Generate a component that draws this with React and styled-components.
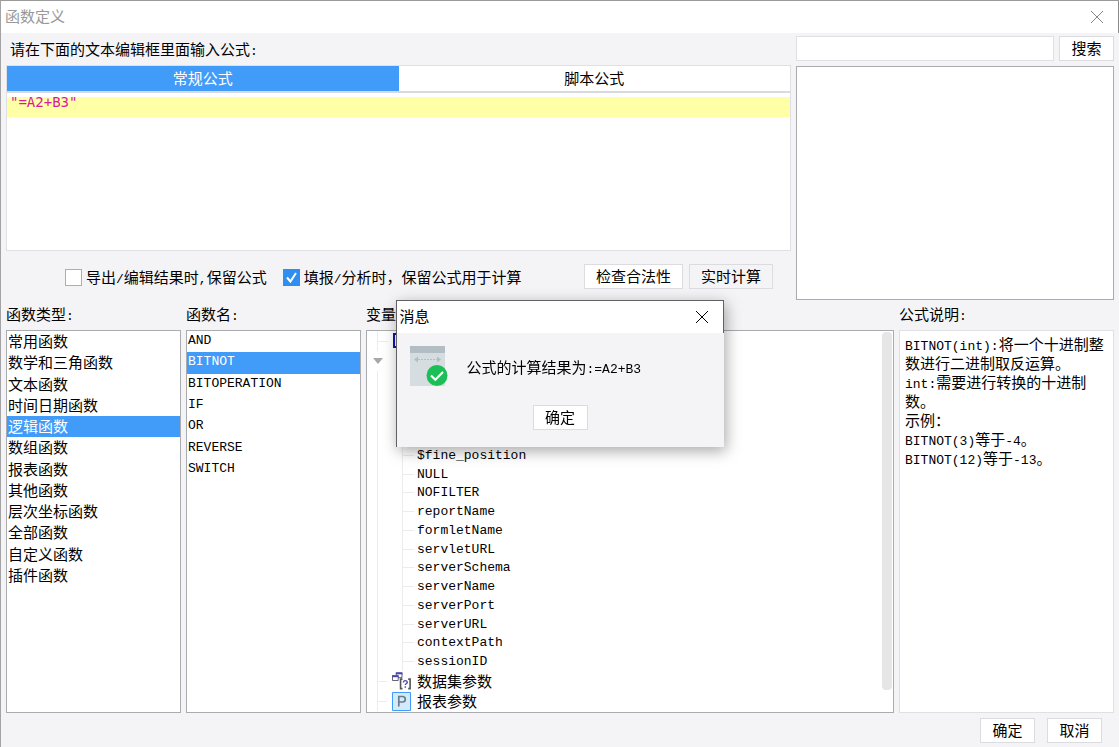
import React from "react";
import styled, { createGlobalStyle, css } from "styled-components";

const blue = "#419bf9";
const surface = "#f4f4f7";
const line = "#e0e0e4";
const frame = "#a9abae";

const GlobalStyle = createGlobalStyle`
  *, *::before, *::after { box-sizing: border-box; }
  body {
    margin: 0;
    color: #000;
    background: ${surface};
    font: 15px/20px "Noto Sans CJK SC", sans-serif;
  }
  button, input, textarea { font: inherit; color: inherit; }
  ul { list-style: none; margin: 0; padding: 0; }
`;

const Window = styled.div`
  min-height: 100vh;
  display: flex;
  flex-direction: column;
  border-top: 1px solid #9a9a9a;
  border-left: 1px solid #a3a3a5;
`;

const TitleBar = styled.header`
  height: 32px;
  display: flex;
  align-items: center;
  justify-content: space-between;
  padding: 0 14px 0 4px;
  background: #fff;
  border-right: 1px solid #8a8a8a;
  color: #999;
`;

const Title = styled.h1`
  margin: 0;
  padding-bottom: 2px;
  font: inherit;
`;

const CloseButton = styled.button`
  display: flex;
  padding: 0;
  border: 0;
  background: none;
`;

const Body = styled.main`
  flex: 1;
  display: flex;
  flex-direction: column;
  padding: 3px 5px 4px;
`;

const Top = styled.section`
  display: grid;
  grid-template-columns: minmax(0, 1fr) 318px;
  column-gap: 5px;
  height: 264px;
`;

const Column = styled.div`
  display: flex;
  flex-direction: column;
  min-width: 0;
`;

const Prompt = styled.label`
  height: 29px;
  padding: 3px 4px 0;
`;

const Tabs = styled.div`
  display: flex;
  height: 26px;
  border: 1px solid ${line};
  border-bottom: 0;
`;

const Tab = styled.button`
  flex: 1;
  padding: 0 0 2px;
  border: 0;
  background: ${(p) => (p.$active ? blue : "#fff")};
  color: ${(p) => (p.$active ? "#fff" : "#000")};
`;

const Editor = styled.textarea`
  height: 160px;
  resize: none;
  outline: 0;
  padding: 0 3px;
  border: 1px solid ${line};
  border-top: 2px solid #d9d9de;
  background: linear-gradient(#fff 4px, #ffffa6 4px, #ffffa6 24px, #fff 24px);
  color: #d81b9c;
  font: 14px/18px "DejaVu Sans Mono", monospace;
`;

const Options = styled.div`
  flex: 1;
  display: flex;
  align-items: center;
  gap: 16px;
  padding: 1px 18px 0 59px;
`;

const Check = styled.label`
  display: flex;
  align-items: center;
  gap: 4px;
  padding-top: 2px;
  white-space: nowrap;
`;

const Box = styled.input`
  appearance: none;
  width: 17px;
  height: 17px;
  margin: 0;
  border: 1px solid #adadb0;
  background: #fff;
  &:checked {
    border-color: #2e8ff0;
    background: #2e8ff0
      url("data:image/svg+xml,%3Csvg xmlns='http://www.w3.org/2000/svg' viewBox='0 0 15 15'%3E%3Cpath d='M3 7.5l3.4 4L12 3' fill='none' stroke='white' stroke-width='2'/%3E%3C/svg%3E");
  }
`;

const Actions = styled.div`
  display: flex;
  gap: ${(p) => p.$gap}px;
  margin-left: auto;
`;

const Button = styled.button`
  height: 25px;
  min-width: 55px;
  padding: 0 ${(p) => (p.$wide ? 11 : 8)}px 1px;
  line-height: 20px;
  white-space: nowrap;
  border: 1px solid #dcdce0;
  background: ${(p) => (p.$plain ? surface : "#fff")};
`;

const SearchRow = styled.div`
  display: flex;
  gap: 5px;
  height: 25px;
  margin-bottom: 5px;
`;

const SearchInput = styled.input`
  flex: 1;
  min-width: 0;
  border: 1px solid ${line};
  background: #fff;
`;

const panel = css`
  border: 1px solid ${frame};
  background: #fff;
`;

const Results = styled.div`
  flex: 1;
  ${panel}
`;

const Bottom = styled.section`
  flex: 1;
  display: grid;
  grid-template-columns: 175px 175px minmax(0, 1fr) 215px;
  column-gap: 5px;
`;

const Heading = styled.h2`
  height: 30px;
  margin: 0;
  padding-top: 4px;
  font: inherit;
`;

const ListPanel = styled.div`
  flex: 1;
  ${panel}
`;

const List = styled.ul`
  display: grid;
  grid-auto-rows: 1fr;
  height: ${(p) => p.$height}px;
`;

const Item = styled.li`
  display: flex;
  align-items: center;
  padding: 0 1px 2px;
  line-height: 19px;
  background: ${(p) => (p.$selected ? blue : "transparent")};
  color: ${(p) => (p.$selected ? "#fff" : "inherit")};
`;

const Latin = styled.span`
  font-family: "Liberation Mono", monospace;
  font-size: 13px;
  line-height: 1;
`;

const TreePanel = styled.div`
  flex: 1;
  display: flex;
  justify-content: space-between;
  ${panel}
`;

const Tree = styled.ul`
  flex: 1;
`;

const Node = styled.li`
  display: flex;
  align-items: center;
  gap: 5px;
  height: 20px;
  padding-left: 10px;
`;

const Guide = styled.span`
  align-self: stretch;
  width: ${(p) => p.$width}px;
  border-left: 1px solid #ececef;
  background: linear-gradient(#ececef, #ececef) 0 50% / 100% 1px no-repeat;
`;

const NodeIcon = styled.span`
  display: flex;
  width: 20px;
`;

const Arrow = styled.svg`
  margin: 0 0 0 -4px;
`;

const Branch = styled.ul`
  display: grid;
  grid-auto-rows: 1fr;
  height: 300px;
  margin-left: 10px;
  padding-left: 24px;
  border-left: 1px solid #ececef;
`;

const Leaf = styled.li`
  display: flex;
  align-items: center;
  gap: 3px;
  line-height: 18px;
`;

const ScrollThumb = styled.div`
  width: 10px;
  height: 358px;
  margin: 1px 1px 0 0;
  border-radius: 4px;
  background: #e6e6e7;
`;

const Description = styled.div`
  flex: 1;
  padding: 3px 5px;
  border: 1px solid ${line};
  background: #fff;
`;

const DescriptionLine = styled.p`
  margin: 0;
  height: 19px;
  line-height: 19px;
  white-space: nowrap;
`;

const Footer = styled.footer`
  display: flex;
  justify-content: flex-end;
  gap: 12px;
  padding: 5px 12px 0 0;
`;

const Overlay = styled.div`
  position: fixed;
  inset: 0;
  display: grid;
  place-items: center;
`;

const Dialog = styled.div`
  width: 328px;
  border: solid #616163;
  border-width: 1px 0 0 1px;
  background: ${surface};
  box-shadow: 2px 4px 14px rgba(0, 0, 0, 0.35);
`;

const DialogTitle = styled.div`
  height: 32px;
  display: flex;
  align-items: center;
  justify-content: space-between;
  padding: 0 14px 0 3px;
  background: #fff;
  border-right: 1px solid #616163;
`;

const Message = styled.div`
  display: flex;
  gap: 19px;
  padding: 13px 12px 0;
`;

const MessageText = styled.p`
  margin: 0;
  padding-top: 11px;
`;

const DialogActions = styled.div`
  display: flex;
  justify-content: center;
  padding: 18px 0 17px;
`;

const Cross = ({ color }) => (
  <svg width="14" height="14" viewBox="0 0 14 14" fill="none" stroke={color} aria-hidden="true">
    <path d="M1 1l12 12M13 1L1 13" />
  </svg>
);

const ResultIcon = () => (
  <svg width="39" height="41" viewBox="0 0 39 41" aria-hidden="true">
    <path fill="#d5dde1" d="M1 0h35v40H1z" />
    <path fill="#b2bec4" d="M1 0h35v7H1z" />
    <path stroke="#b2bec4" strokeWidth="1" strokeDasharray="2 1" d="M9 13.500h19" />
    <path fill="#b2bec4" d="M5 13.500l4-3v6zM32 13.500l-4-3v6z" />
    <circle cx="28" cy="29.500" r="10.500" fill="#1bbf56" />
    <path fill="none" stroke="#fff" strokeWidth="2.200" d="M22 29.500l4.300 4.200 7.700-7.700" />
  </svg>
);

const RootIcon = () => (
  <svg width="18" height="16" viewBox="0 0 18 16" aria-hidden="true">
    <path fill="#fff" stroke="#1010b0" strokeWidth="2" d="M1 1h15v13H1z" />
  </svg>
);

const DatasetIcon = () => (
  <svg width="21" height="20" viewBox="0 0 21 20" fill="none" aria-hidden="true">
    <path stroke="#4a4aa6" d="M4.500 1.500h6v5h-6z" fill="#fff" />
    <path fill="#4a4aa6" d="M4 1h7v2H4z" />
    <path stroke="#5a5a70" d="M.5 4.500h6v5h-6z" fill="#fff" />
    <path fill="#4a4aa6" d="M0 4h7v2H0z" />
    <path stroke="#555" strokeWidth="1.700" d="M11 8H9v10h2M17 8h2v10h-2" />
    <path stroke="#4a4ac0" strokeWidth="1.500" d="M12 11.500c0-2.500 4-2.500 4 0 0 1.500-2 1.300-2 2.700M14 15.500v1.500" />
  </svg>
);

const ParamIcon = () => (
  <svg width="19" height="19" viewBox="0 0 19 19" fill="none" aria-hidden="true">
    <path fill="#d3e9fc" stroke="#419bf9" d="M.5.5h18v18H.5z" />
    <path stroke="#6b7c89" strokeWidth="1.700" d="M6.800 14.500V4.500h3.700c3.700 0 3.700 5.500 0 5.500H6.800" />
  </svg>
);

const types = [
  "常用函数", "数学和三角函数", "文本函数", "时间日期函数", "逻辑函数", "数组函数",
  "报表函数", "其他函数", "层次坐标函数", "全部函数", "自定义函数", "插件函数",
];
const names = ["AND", "BITNOT", "BITOPERATION", "IF", "OR", "REVERSE", "SWITCH"];
const variables = [
  "", "", "", "", "$fine_position", "NULL", "NOFILTER", "reportName", "formletName", "servletURL",
  "serverSchema", "serverName", "serverPort", "serverURL", "contextPath", "sessionID",
];

export default function App() {
  return (
    <>
      <GlobalStyle />
      <Window>
        <TitleBar>
          <Title>函数定义</Title>
          <CloseButton aria-label="关闭"><Cross color="#888" /></CloseButton>
        </TitleBar>
        <Body>
          <Top>
            <Column>
              <Prompt htmlFor="formula">请在下面的文本编辑框里面输入公式<Latin>:</Latin></Prompt>
              <Tabs role="tablist">
                <Tab role="tab" aria-selected="true" $active>常规公式</Tab>
                <Tab role="tab" aria-selected="false">脚本公式</Tab>
              </Tabs>
              <Editor id="formula" spellCheck="false" defaultValue={'"=A2+B3"'} />
              <Options>
                <Check>
                  <Box type="checkbox" />
                  <span>导出<Latin>/</Latin>编辑结果时<Latin>,</Latin>保留公式</span>
                </Check>
                <Check>
                  <Box type="checkbox" defaultChecked />
                  <span>填报<Latin>/</Latin>分析时，保留公式用于计算</span>
                </Check>
                <Actions $gap={6}>
                  <Button $wide>检查合法性</Button>
                  <Button $wide $plain>实时计算</Button>
                </Actions>
              </Options>
            </Column>
            <Column>
              <SearchRow>
                <SearchInput type="text" aria-label="搜索" />
                <Button>搜索</Button>
              </SearchRow>
              <Results />
            </Column>
          </Top>
          <Bottom>
            <Column>
              <Heading>函数类型<Latin>:</Latin></Heading>
              <ListPanel>
                <List role="listbox" aria-label="函数类型" $height={255}>
                  {types.map((t, i) => (
                    <Item key={t} role="option" aria-selected={i === 4} $selected={i === 4}>{t}</Item>
                  ))}
                </List>
              </ListPanel>
            </Column>
            <Column>
              <Heading>函数名<Latin>:</Latin></Heading>
              <ListPanel>
                <List role="listbox" aria-label="函数名" $height={149}>
                  {names.map((n, i) => (
                    <Item key={n} role="option" aria-selected={i === 1} $selected={i === 1}>
                      <Latin>{n}</Latin>
                    </Item>
                  ))}
                </List>
              </ListPanel>
            </Column>
            <Column>
              <Heading>变量</Heading>
              <TreePanel>
                <Tree>
                  <Node><Guide $width={11} /><RootIcon /></Node>
                  <Node>
                    <Arrow width="10" height="6" viewBox="0 0 10 6" aria-hidden="true">
                      <path fill="#a8a8a8" d="M0 0h10L5 6z" />
                    </Arrow>
                  </Node>
                  <li>
                    <Branch>
                      {variables.map((v, i) => (
                        <Leaf key={i}><Guide $width={12} /><Latin>{v}</Latin></Leaf>
                      ))}
                    </Branch>
                  </li>
                  <Node><Guide $width={10} /><NodeIcon><DatasetIcon /></NodeIcon><span>数据集参数</span></Node>
                  <Node><Guide $width={10} /><NodeIcon><ParamIcon /></NodeIcon><span>报表参数</span></Node>
                </Tree>
                <ScrollThumb />
              </TreePanel>
            </Column>
            <Column>
              <Heading>公式说明<Latin>:</Latin></Heading>
              <Description>
                <DescriptionLine><Latin>BITNOT(int):</Latin>将一个十进制整</DescriptionLine>
                <DescriptionLine>数进行二进制取反运算。</DescriptionLine>
                <DescriptionLine><Latin>int:</Latin>需要进行转换的十进制</DescriptionLine>
                <DescriptionLine>数。</DescriptionLine>
                <DescriptionLine>示例：</DescriptionLine>
                <DescriptionLine><Latin>BITNOT(3)</Latin>等于<Latin>-4</Latin>。</DescriptionLine>
                <DescriptionLine><Latin>BITNOT(12)</Latin>等于<Latin>-13</Latin>。</DescriptionLine>
              </Description>
            </Column>
          </Bottom>
          <Footer>
            <Button>确定</Button>
            <Button>取消</Button>
          </Footer>
        </Body>
      </Window>
      <Overlay>
        <Dialog role="dialog" aria-label="消息">
          <DialogTitle>
            <Title as="span">消息</Title>
            <CloseButton aria-label="关闭"><Cross color="#000" /></CloseButton>
          </DialogTitle>
          <Message>
            <ResultIcon />
            <MessageText>公式的计算结果为<Latin>:=A2+B3</Latin></MessageText>
          </Message>
          <DialogActions><Button>确定</Button></DialogActions>
        </Dialog>
      </Overlay>
    </>
  );
}
